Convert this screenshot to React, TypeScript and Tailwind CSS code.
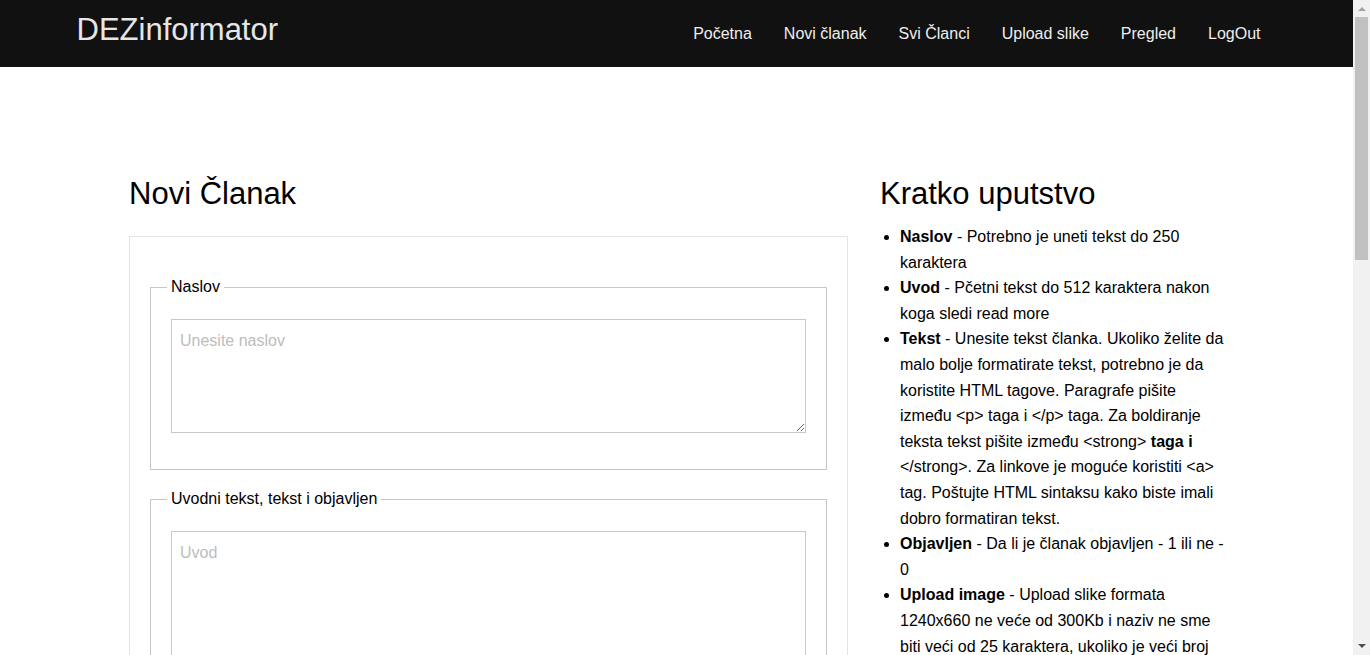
import React from "react";

const navLinks = ["Početna", "Novi članak", "Svi Članci", "Upload slike", "Pregled", "LogOut"];

function Navbar() {
  return (
    <nav className="h-[67px] bg-[#111111]">
      <div className="mx-auto flex h-full w-[1200px] items-start justify-between">
        <a href="#" className="mt-[11px] text-[31px] leading-[37px] text-[#e6e6e6]">
          DEZinformator
        </a>
        <ul className="mt-[24px] flex text-[16px] leading-[20px] text-[#eeeeee]">
          {navLinks.map((link) => (
            <li key={link}>
              <a href="#" className="px-4">
                {link}
              </a>
            </li>
          ))}
        </ul>
      </div>
    </nav>
  );
}

function Field({ legend, placeholder, height }: { legend: string; placeholder: string; height: string }) {
  return (
    <fieldset className="border border-[#c6c6c6] px-5 pb-[36px]">
      <legend className="-ml-1 px-1 text-[16px] leading-[20px]">{legend}</legend>
      <textarea
        placeholder={placeholder}
        className={`mt-[22px] block w-full border border-[#c8c8c8] bg-white px-2 pt-[11px] pb-2 text-[16px] leading-[20px] placeholder:text-[#bdbdbd] ${height}`}
      />
    </fieldset>
  );
}

function Guide() {
  return (
    <div className="w-[345px] shrink-0">
      <h2 className="text-[31px] leading-[37px]">Kratko uputstvo</h2>
      <ul className="mt-[12px] list-disc pl-5 text-[16px] leading-[1.6]">
        <li>
          <strong>Naslov</strong> - Potrebno je uneti tekst do 250 karaktera
        </li>
        <li>
          <strong>Uvod</strong> - Pčetni tekst do 512 karaktera nakon koga sledi read more
        </li>
        <li>
          <strong>Tekst</strong> - Unesite tekst članka. Ukoliko želite da malo bolje formatirate tekst,
          potrebno je da koristite HTML tagove. Paragrafe pišite između &lt;p&gt; taga i &lt;/p&gt; taga. Za
          boldiranje teksta tekst pišite između &lt;strong&gt; <strong>taga i</strong> &lt;/strong&gt;. Za
          linkove je moguće koristiti &lt;a&gt; tag. Poštujte HTML sintaksu kako biste imali dobro formatiran
          tekst.
        </li>
        <li>
          <strong>Objavljen</strong> - Da li je članak objavljen - 1 ili ne - 0
        </li>
        <li>
          <strong>Upload image</strong> - Upload slike formata 1240x660 ne veće od 300Kb i naziv ne sme biti
          veći od 25 karaktera, ukoliko je veći broj karaktera slika neće biti sačuvana.
        </li>
      </ul>
    </div>
  );
}

// the page is long, so the window shows a classic scrollbar at the right
function Scrollbar() {
  return (
    <div className="fixed top-0 right-0 flex h-screen w-[17px] flex-col items-center bg-[#f1f1f1]">
      <div className="mt-[7px] h-0 w-0 border-x-[4px] border-b-[4px] border-x-transparent border-b-[#a3a3a3]" />
      <div className="mt-[6px] h-[243px] w-[13px] bg-[#c1c1c1]" />
      <div className="mt-auto mb-[7px] h-0 w-0 border-x-[4px] border-t-[4px] border-x-transparent border-t-[#505050]" />
    </div>
  );
}

export default function App() {
  return (
    <div className="min-h-screen bg-white pr-[17px] font-['Liberation_Sans',Arial,sans-serif] text-black">
      <Navbar />
      <main className="mx-auto flex w-[1095px] gap-8 pt-[108px] pb-24">
        <div className="w-[719px] shrink-0">
          <h2 className="text-[31px] leading-[37px]">Novi Članak</h2>
          <form className="mt-[24px] flex flex-col gap-[19px] border border-[#e4e4e4] px-5 pt-10 pb-10">
            <Field legend="Naslov" placeholder="Unesite naslov" height="h-[114px]" />
            <Field legend="Uvodni tekst, tekst i objavljen" placeholder="Uvod" height="h-[220px]" />
            <Field legend="Tekst" placeholder="Tekst članka" height="h-[400px]" />
            <fieldset className="border border-[#c6c6c6] px-5 pb-[36px]">
              <legend className="-ml-1 px-1 text-[16px] leading-[20px]">Objavljen</legend>
              <select className="mt-[22px] block w-full border border-[#c8c8c8] bg-white px-2 py-2 text-[16px]">
                <option>0</option>
                <option>1</option>
              </select>
            </fieldset>
            <fieldset className="border border-[#c6c6c6] px-5 pb-[36px]">
              <legend className="-ml-1 px-1 text-[16px] leading-[20px]">Slika</legend>
              <input
                type="text"
                placeholder="Naziv slike"
                className="mt-[22px] block w-full border border-[#c8c8c8] px-2 py-2 text-[16px] placeholder:text-[#bdbdbd]"
              />
            </fieldset>
            <button type="button" className="self-start bg-[#111111] px-6 py-2 text-[16px] text-[#eeeeee]">
              Sačuvaj
            </button>
          </form>
        </div>
        <Guide />
      </main>
      <Scrollbar />
    </div>
  );
}
